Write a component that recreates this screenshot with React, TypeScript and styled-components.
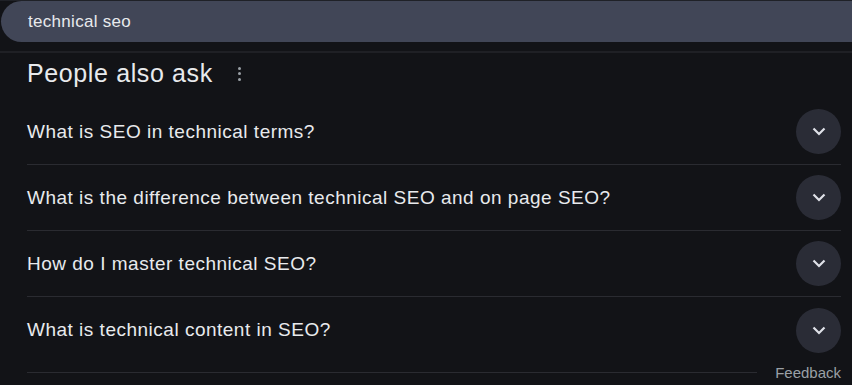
import React from 'react'
import styled, { createGlobalStyle } from 'styled-components'

const GlobalStyle = createGlobalStyle`
  html, body {
    margin: 0;
    padding: 0;
    background: #121317;
  }
  * {
    box-sizing: border-box;
  }
`

const Page = styled.div`
  width: 852px;
  height: 385px;
  overflow: hidden;
  background: #121317;
  font-family: Arial, 'Liberation Sans', sans-serif;
  color: #e8eaed;
  border-top: 1px solid #1f2127;
`

const SearchBar = styled.div`
  height: 41px;
  margin-left: 1px;
  margin-right: -40px;
  border-radius: 21px 0 0 21px;
  background: #414657;
  display: flex;
  align-items: center;
  padding-left: 27px;
  font-size: 17px;
  letter-spacing: 0.3px;
  color: #e8eaed;
`

const Rule = styled.div`
  height: 2px;
  margin-top: 9px;
  background: #1f2025;
`

const Section = styled.div`
  padding: 0 11px 0 27px;
`

const Header = styled.div`
  height: 46px;
  display: flex;
  align-items: center;
  gap: 25px;
  padding-bottom: 5px;
`

const Title = styled.h2`
  margin: 0;
  font-weight: 400;
  font-size: 25px;
  color: #e8eaed;
  letter-spacing: 0.62px;
`

const Kebab = styled.div`
  display: flex;
  flex-direction: column;
  gap: 2.5px;

  span {
    width: 3px;
    height: 3px;
    border-radius: 50%;
    background: #9aa0a6;
  }
`

const Row = styled.div<{ $last?: boolean }>`
  height: 66px;
  display: flex;
  align-items: center;
  justify-content: space-between;
  border-bottom: ${(p) => (p.$last ? 'none' : '1px solid #2a2b31')};
`

const Question = styled.span`
  font-size: 19px;
  letter-spacing: 0.5px;
  color: #e8eaed;
`

const Toggle = styled.div`
  width: 45px;
  height: 45px;
  border-radius: 50%;
  background: #2a2c36;
  display: flex;
  align-items: center;
  justify-content: center;
  flex-shrink: 0;
`

const Footer = styled.div`
  display: flex;
  align-items: center;
  gap: 18px;
  height: 18px;
`

const Line = styled.div`
  flex: 1;
  height: 1px;
  background: #2a2b31;
`

const FeedbackLink = styled.span`
  font-size: 15px;
  color: #9aa0a6;
`

const questions = [
  'What is SEO in technical terms?',
  'What is the difference between technical SEO and on page SEO?',
  'How do I master technical SEO?',
  'What is technical content in SEO?',
]

const Chevron = () => (
  <svg width="14" height="9" viewBox="0 0 14 9">
    <path d="M1.5 1.5 L7 7 L12.5 1.5" fill="none" stroke="#dfe1e8" strokeWidth="2.2" />
  </svg>
)

export default function App() {
  return (
    <Page>
      <GlobalStyle />
      <SearchBar>technical seo</SearchBar>
      <Rule />
      <Section>
        <Header>
          <Title>People also ask</Title>
          <Kebab>
            <span />
            <span />
            <span />
          </Kebab>
        </Header>
        {questions.map((q, i) => (
          <Row key={q} $last={i === questions.length - 1}>
            <Question>{q}</Question>
            <Toggle>
              <Chevron />
            </Toggle>
          </Row>
        ))}
        <Footer>
          <Line />
          <FeedbackLink>Feedback</FeedbackLink>
        </Footer>
      </Section>
    </Page>
  )
}
